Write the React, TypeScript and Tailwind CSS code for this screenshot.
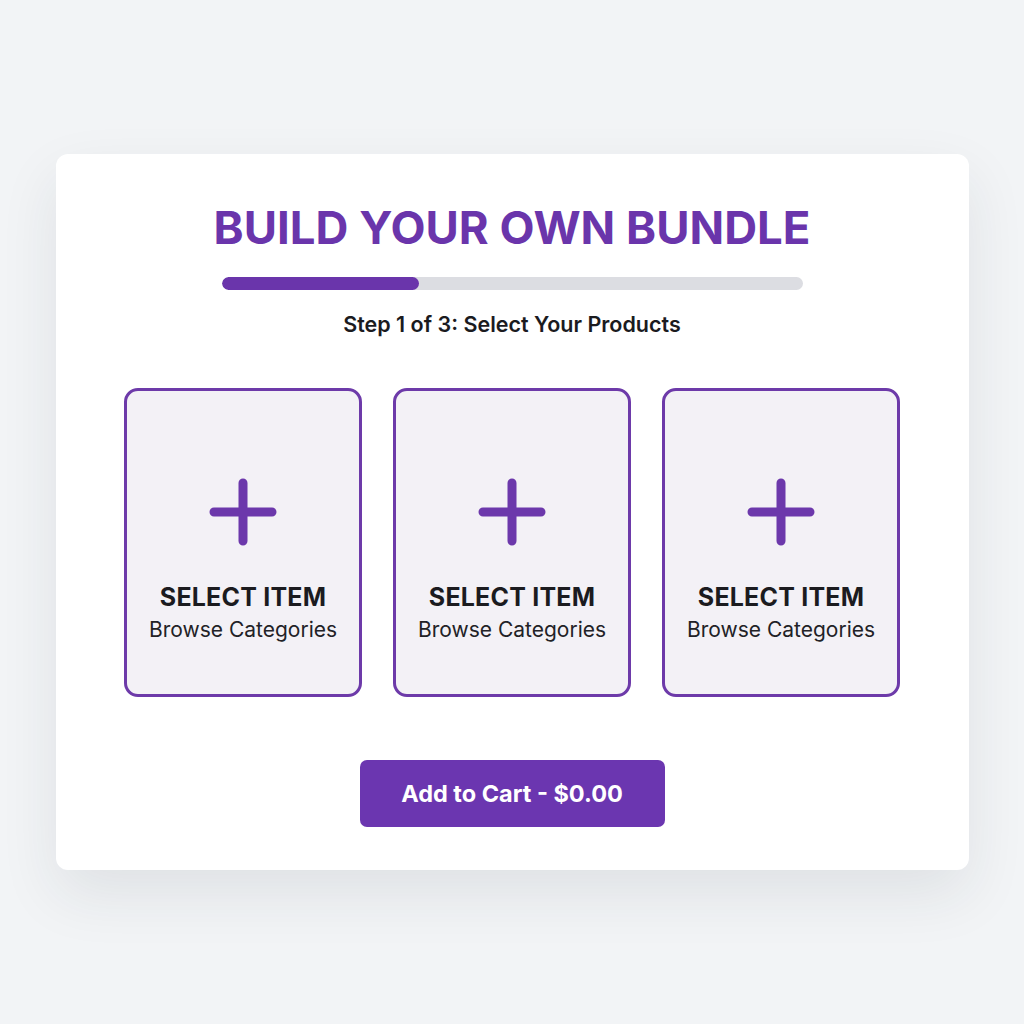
const slots = [1, 2, 3];

function PlusIcon() {
  return (
    <svg width="68" height="68" viewBox="0 0 68 68" fill="none">
      <path
        d="M34 5v58M5 34h58"
        stroke="#6c38ab"
        strokeWidth="9"
        strokeLinecap="round"
      />
    </svg>
  );
}

function SlotCard() {
  return (
    <div className="w-[238px] h-[309px] rounded-[14px] border-[3px] border-[#6d3aa9] bg-[#f3f1f6] flex flex-col items-center pt-[87px]">
      <PlusIcon />
      <div className="mt-[37px] text-[25px] leading-[28px] font-bold text-[#1b1b1f] tracking-[0.2px]">
        SELECT ITEM
      </div>
      <div className="mt-[7px] text-[21px] leading-[24px] text-[#222226]">
        Browse Categories
      </div>
    </div>
  );
}

export default function App() {
  return (
    <div
      className="min-h-screen w-full bg-[#f2f4f6] flex items-center justify-center"
      style={{ fontFamily: "Inter, 'Noto Sans', sans-serif" }}
    >
      <div className="w-[913px] h-[716px] bg-white rounded-[12px] shadow-[0_24px_60px_rgba(30,40,60,0.09)] flex flex-col items-center pt-[52px]">
        <h1 className="text-[45.5px] leading-[44px] font-bold text-[#6a35ab]">
          BUILD YOUR OWN BUNDLE
        </h1>

        {/* progress */}
        <div className="mt-[27px] w-[581px] h-[13px] rounded-full bg-[#dcdde2] overflow-hidden">
          <div className="h-full w-[197px] rounded-full bg-[#6a35ab]" />
        </div>

        <p className="mt-[22px] text-[21.5px] leading-[24px] font-semibold text-[#1b1b1f]">
          Step 1 of 3: Select Your Products
        </p>

        <div className="mt-[52px] flex gap-[31px]">
          {slots.map((s) => (
            <SlotCard key={s} />
          ))}
        </div>

        <button className="mt-[63px] w-[305px] h-[67px] rounded-[7px] bg-[#6b36b0] text-white text-[23.5px] font-bold">
          Add to Cart - $0.00
        </button>
      </div>
    </div>
  );
}
